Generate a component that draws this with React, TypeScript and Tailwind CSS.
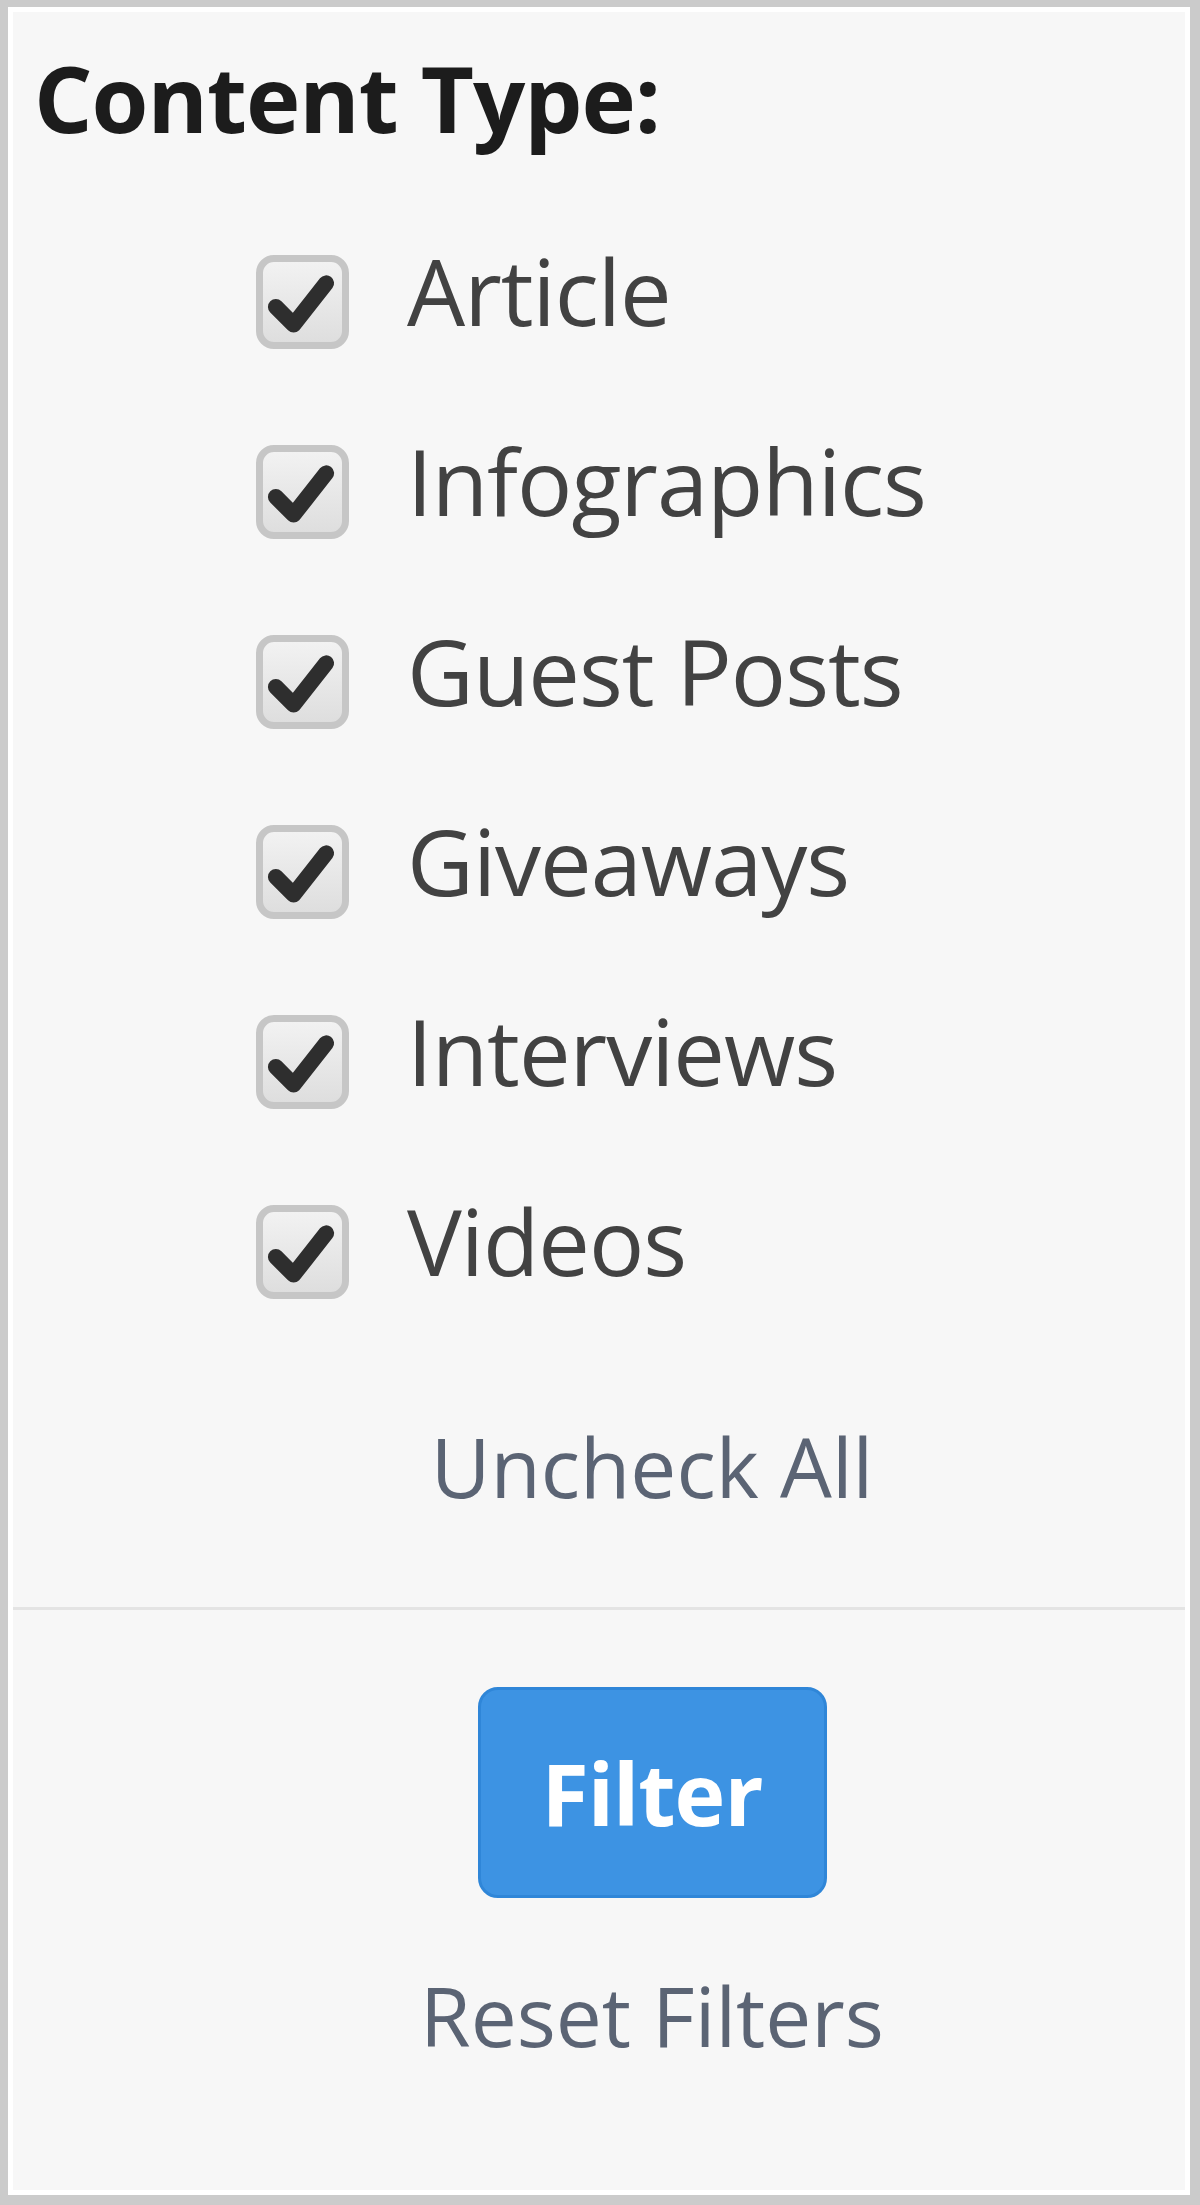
const items = ['Article', 'Infographics', 'Guest Posts', 'Giveaways', 'Interviews', 'Videos'];

function CheckBox() {
  return (
    <span className="mt-[22px] flex h-[94px] w-[93px] shrink-0 items-center justify-center rounded-[18px] border-[7px] border-[#c6c6c6] bg-gradient-to-b from-[#f2f2f2] to-[#dedede]">
      <svg width="80" height="80" viewBox="0 0 80 80">
        <path d="M13 45 L31 63 L64 21" fill="none" stroke="#2e2e2e" strokeWidth="16" strokeLinecap="round" strokeLinejoin="round" />
      </svg>
    </span>
  );
}

export default function App() {
  return (
    <div className="h-[2205px] w-[1200px] border-[8px] border-t-[7px] border-r-[10px] border-b-[10px] border-[#cbcbcb] font-['Open_Sans',sans-serif]">
      <div className="flex h-full flex-col border-[5px] border-white bg-[#f7f7f7]">
        <h2 className="pl-[21px] pt-[38px] text-[92px] font-bold leading-[96px] tracking-[-1px] text-[#1c1c1c]">
          Content Type:
        </h2>

        <ul className="mt-[50px] flex flex-col pl-[243px]">
          {items.map((item) => (
            <li key={item} className="flex h-[190px] items-center gap-[58px]">
              <CheckBox />
              <span className="text-[92px] leading-[96px] tracking-[-1px] text-[#424242]">{item}</span>
            </li>
          ))}
        </ul>

        <div className="mt-[89px] pl-[106px] text-center text-[82px] leading-[82px] text-[#5b6474]">
          Uncheck All
        </div>

        <div className="mt-[100px] h-[3px] bg-[#e4e4e4]" />

        <div className="flex flex-col items-center pl-[106px]">
          <button className="mt-[77px] h-[211px] w-[349px] rounded-[20px] border-[3px] border-[#2f86d8] bg-[#3d93e3] text-[86px] font-bold leading-none tracking-[-1px] text-white">
            Filter
          </button>
          <div className="mt-[76px] text-[82px] leading-[82px] text-[#5b6474]">Reset Filters</div>
        </div>
      </div>
    </div>
  );
}
